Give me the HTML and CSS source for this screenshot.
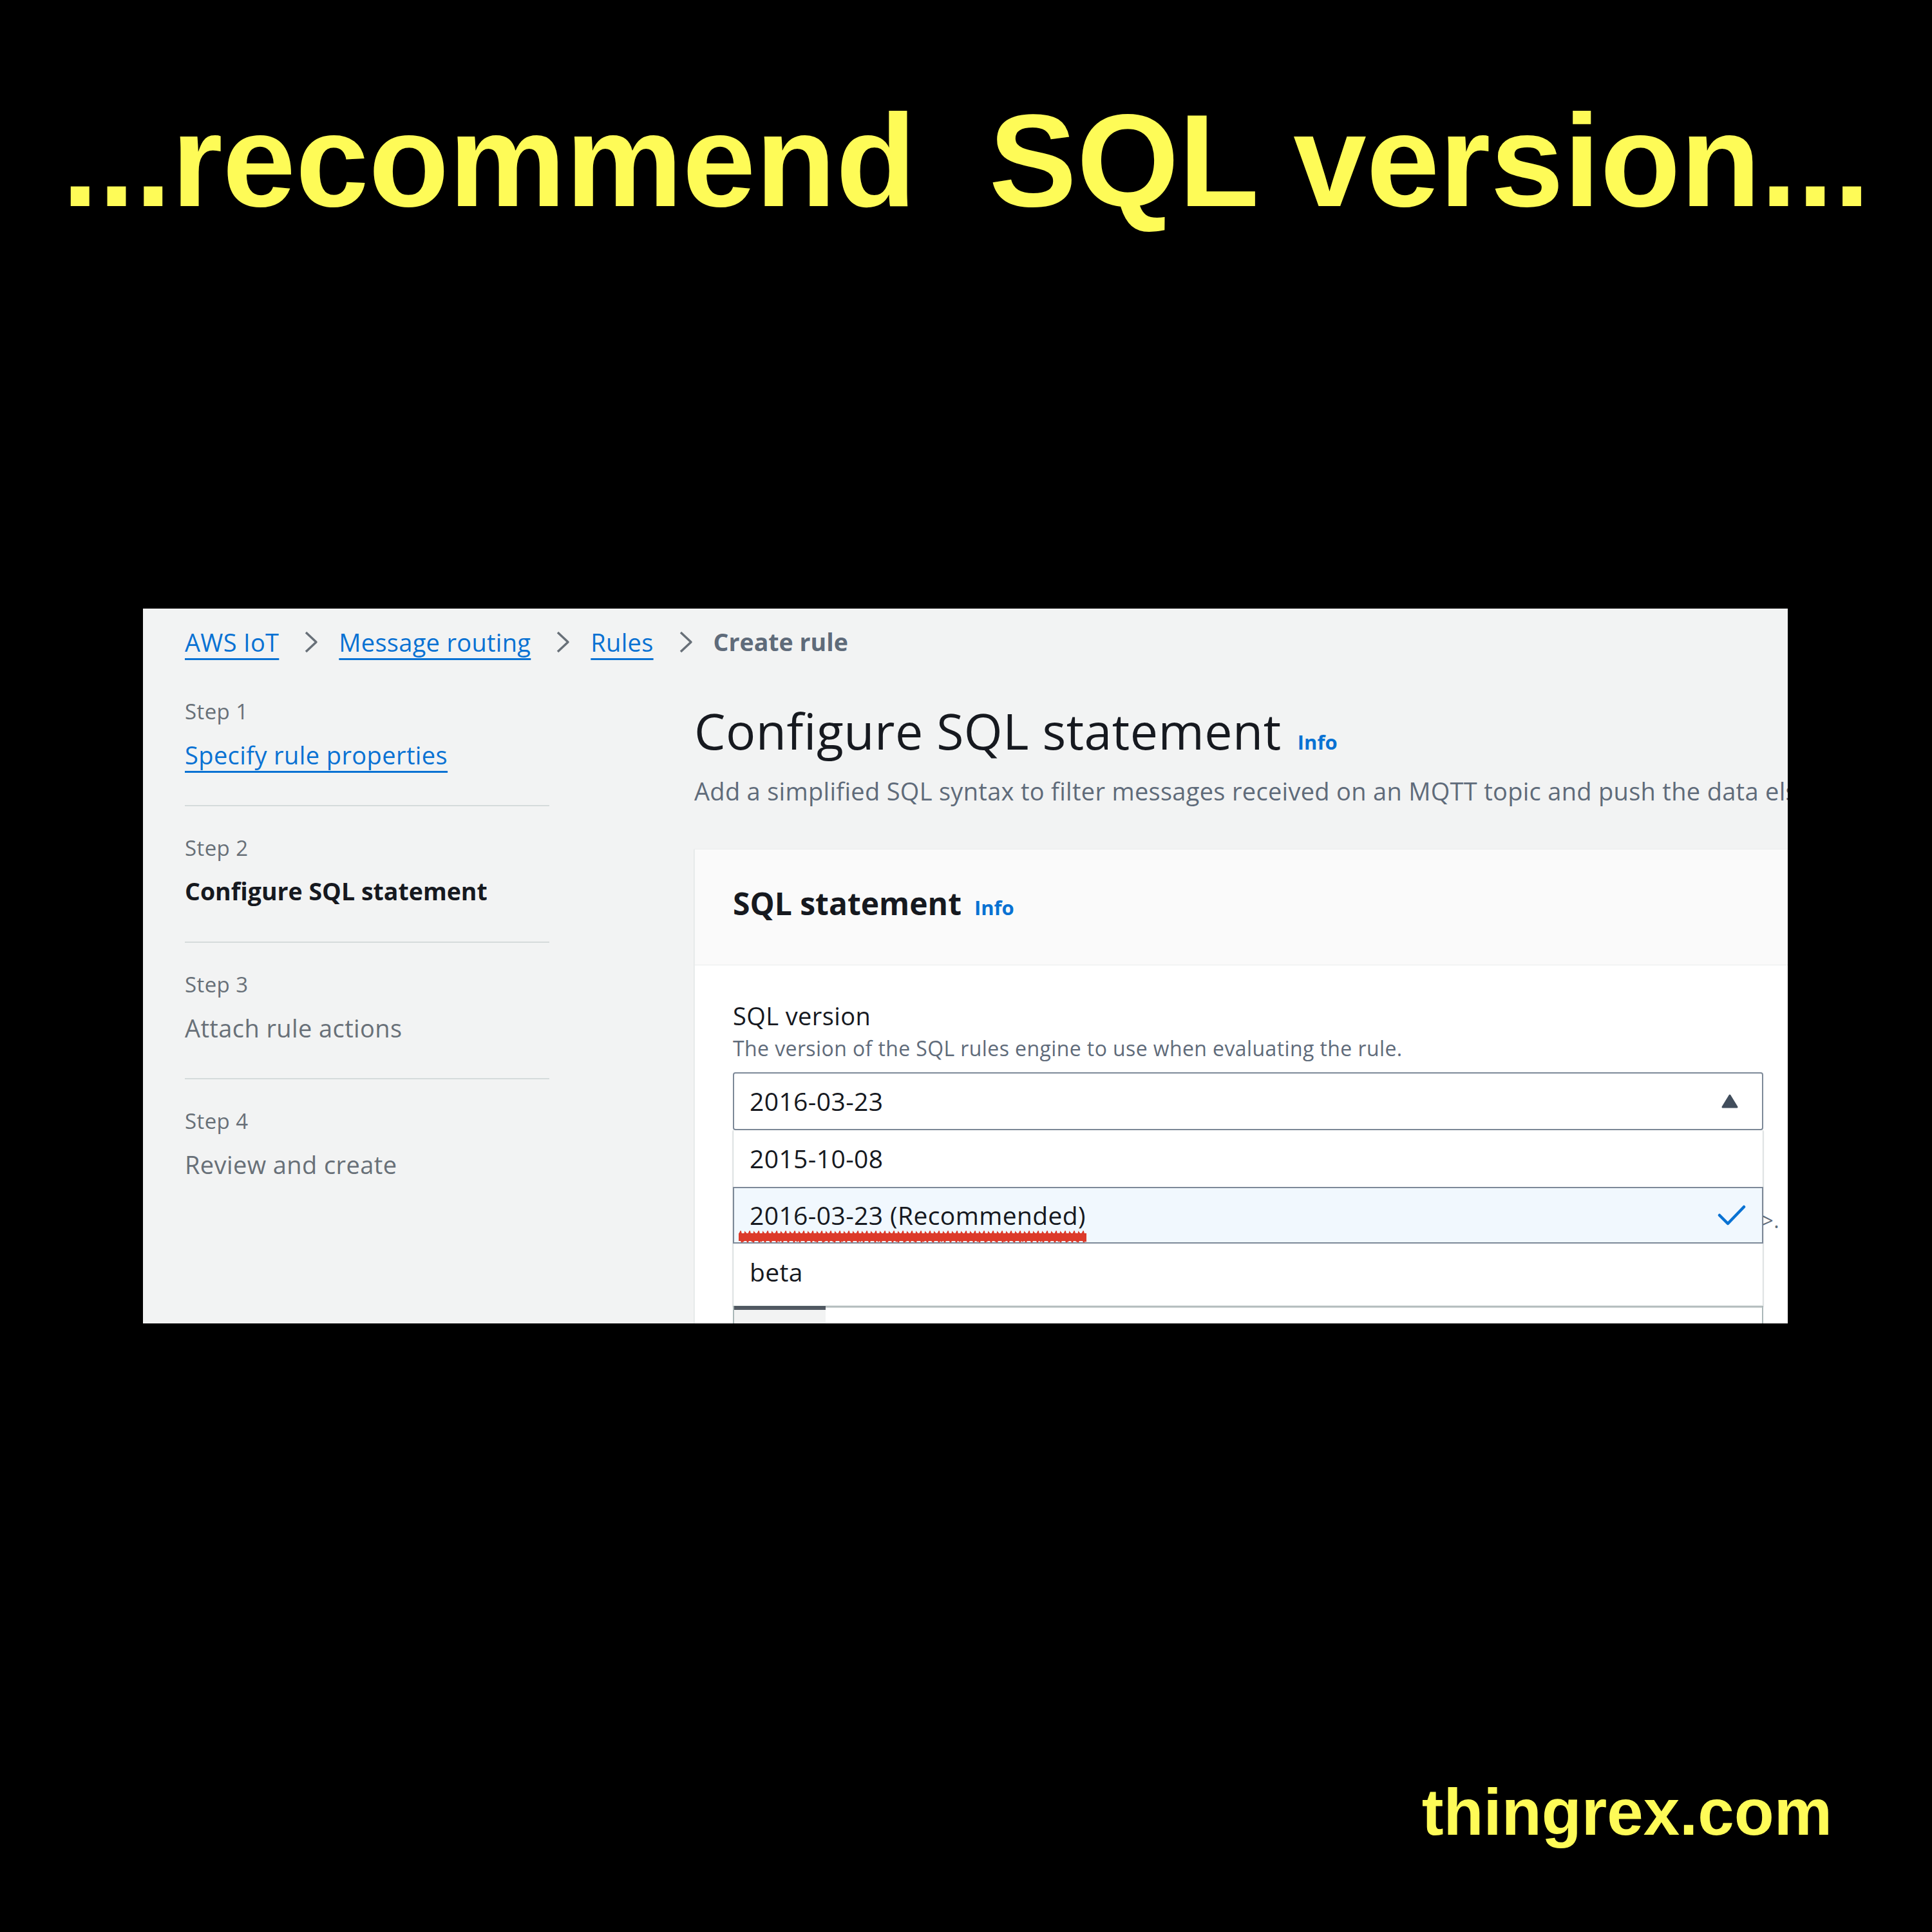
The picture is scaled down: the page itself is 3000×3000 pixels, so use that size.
FILE: index.html
```html
<!DOCTYPE html>
<html lang="en">
    <head>
        <meta charset="UTF-8" />
        <meta name="viewport" content="width=device-width, initial-scale=1.0" />
        <title>recommend SQL version</title>
        <link rel="stylesheet" href="styles.css">
    </head>
    <body>
        <div class="slide">
            <h1 class="headline">...recommend  SQL version...</h1>

            <!-- 控制台截图 -->
            <div class="shot">
                <nav class="crumbs">
                    <a href="#">AWS IoT</a>
                    <svg class="crumb-sep" viewBox="0 0 26 36"><polyline points="5,3 21,18 5,33" /></svg>
                    <a href="#">Message routing</a>
                    <svg class="crumb-sep" viewBox="0 0 26 36"><polyline points="5,3 21,18 5,33" /></svg>
                    <a href="#">Rules</a>
                    <svg class="crumb-sep" viewBox="0 0 26 36"><polyline points="5,3 21,18 5,33" /></svg>
                    <span class="crumb-current">Create rule</span>
                </nav>

                <div class="layout">
                    <ol class="steps">
                        <li class="step">
                            <div class="step-num">Step 1</div>
                            <a href="#" class="step-name is-link">Specify rule properties</a>
                        </li>
                        <li class="step">
                            <div class="step-num">Step 2</div>
                            <div class="step-name is-current">Configure SQL statement</div>
                        </li>
                        <li class="step">
                            <div class="step-num">Step 3</div>
                            <div class="step-name">Attach rule actions</div>
                        </li>
                        <li class="step">
                            <div class="step-num">Step 4</div>
                            <div class="step-name">Review and create</div>
                        </li>
                    </ol>

                    <main class="content">
                        <h2 class="page-title">Configure SQL statement<span class="info">Info</span></h2>
                        <p class="page-desc">Add a simplified SQL syntax to filter messages received on an MQTT topic and push the data elsewhere.</p>

                        <section class="panel">
                            <header class="panel-head">
                                <h3 class="panel-title">SQL statement<span class="info">Info</span></h3>
                            </header>
                            <div class="panel-body">
                                <div class="field">
                                    <div class="field-label">SQL version</div>
                                    <div class="field-hint">The version of the SQL rules engine to use when evaluating the rule.</div>
                                    <div class="select-wrap">
                                        <div class="select">
                                            <span>2016-03-23</span>
                                            <svg class="caret" viewBox="0 0 30 26"><polygon points="4,22 15,4 26,22" /></svg>
                                        </div>
                                        <!-- 下拉选项 -->
                                        <ul class="options">
                                            <li class="option">2015-10-08</li>
                                            <li class="option is-selected">
                                                <span>2016-03-23 (Recommended)</span>
                                                <svg class="check" viewBox="0 0 44 32"><polyline points="3,16 16,29 41,3" /></svg>
                                                <!-- 红色标记线 -->
                                                <svg class="squiggle" viewBox="0 0 540 20" preserveAspectRatio="none">
                                                    <defs>
                                                        <pattern id="zig-a" width="14" height="20" patternUnits="userSpaceOnUse">
                                                            <path d="M0 8 L3 2 L7 17 L10 3 L14 8" />
                                                        </pattern>
                                                        <pattern id="zig-b" width="9" height="20" patternUnits="userSpaceOnUse">
                                                            <path d="M0 12 L2 4 L5 18 L7 6 L9 12" />
                                                        </pattern>
                                                    </defs>
                                                    <rect x="0" y="4" width="540" height="12" class="squiggle-band" />
                                                    <rect x="0" y="0" width="540" height="20" fill="url(#zig-a)" />
                                                    <rect x="0" y="0" width="540" height="20" fill="url(#zig-b)" />
                                                </svg>
                                            </li>
                                            <li class="option">beta</li>
                                        </ul>
                                    </div>
                                </div>

                                <div class="field field-query">
                                    <div class="field-label">SQL query</div>
                                    <div class="field-hint hint-wide">
                                        <span>Enter a SQL statement using the following: SELECT &lt;Attribute&gt; FROM &lt;Topic Filter&gt; WHERE &lt;Condition&gt;.</span>
                                    </div>
                                </div>

                                <div class="editor">
                                    <div class="gutter"></div>
                                    <div class="code"></div>
                                </div>
                            </div>
                        </section>
                    </main>
                </div>
            </div>

            <div class="brand">thingrex.com</div>
        </div>
    </body>
</html>
```

FILE: styles.css
```css
* {
    margin: unset;
    padding: unset;
    box-sizing: border-box;
}
body {
    background: #000;
}
.slide {
    width: 3000px;
    height: 3000px;
    padding-top: 129px;
    font-family: "Open Sans", "Noto Sans", sans-serif;
}
.headline {
    font: bold 204px/240px "Liberation Sans", Arial, sans-serif;
    color: #fefb57;
    text-align: center;
    white-space: pre;
}
.brand {
    margin-top: 699px;
    padding-right: 155px;
    text-align: right;
    font: bold 101.5px/120px "Liberation Sans", Arial, sans-serif;
    color: #fefb57;
}

/* 截图区域 */
.shot {
    margin: 576px 0 0 222px;
    width: 2554px;
    height: 1110px;
    overflow: hidden;
    background: #f2f3f3;
    padding: 24px 0 0 65px;
    color: #16191f;
    letter-spacing: 0.4px;
}
.crumbs {
    display: flex;
    align-items: center;
    height: 56px;
    font-size: 38px;
    line-height: 56px;
    letter-spacing: 0.3px;
    a {
        color: #0972d3;
        text-decoration: underline;
        text-decoration-thickness: 3px;
        text-underline-offset: 10px;
    }
}
.crumb-sep {
    width: 26px;
    height: 36px;
    margin: 0 30px 0 37px;
    polyline {
        fill: none;
        stroke: #687078;
        stroke-width: 3.5;
        stroke-linejoin: round;
    }
}
.crumb-current {
    font-size: 37.5px;
    font-weight: 700;
    color: #5f6b7a;
    letter-spacing: 0;
}

.layout {
    display: flex;
}
.steps {
    list-style: none;
    margin-top: 15px;
    width: 566px;
    flex-shrink: 0;
}
.step {
    padding: 41px 0 50px;
}
.step + .step {
    border-top: 2px solid #d5dbdb;
}
.step-num {
    font-size: 33px;
    line-height: 48px;
    color: #687078;
}
.step-name {
    display: block;
    margin-top: 15px;
    font-size: 38px;
    line-height: 56px;
    color: #687078;
}
.step-name.is-link {
    color: #0972d3;
    text-decoration: underline;
    text-decoration-thickness: 3px;
    text-underline-offset: 10px;
}
.step-name.is-current {
    font-size: 37.5px;
    font-weight: 700;
    color: #16191f;
    letter-spacing: 0;
}

.content {
    width: 1720px;
    flex-shrink: 0;
    margin-left: 225px;
    padding-top: 62px;
}
.page-title {
    font-size: 77px;
    line-height: 96px;
    font-weight: 400;
    letter-spacing: 0.5px;
}
.info {
    margin-left: 25px;
    font-size: 31px;
    line-height: 1;
    font-weight: 700;
    color: #0972d3;
    letter-spacing: 0;
}
.panel-title .info {
    margin-left: 20px;
}
.page-desc {
    margin-top: 17px;
    font-size: 38px;
    line-height: 56px;
    color: #5f6b7a;
    white-space: nowrap;
    letter-spacing: 0.3px;
}

.panel {
    margin-top: 62px;
    background: #fff;
    border: 1px solid #eaeded;
    box-shadow: 0 1px 1px rgba(0, 28, 36, 0.3);
}
.panel-head {
    background: #fafafa;
    padding: 52px 59px 63px;
    border-bottom: 1px solid #eaeded;
}
.panel-title {
    font-size: 48px;
    line-height: 64px;
    font-weight: 700;
    letter-spacing: 0;
}
.panel-body {
    padding: 53px 20px 0 59px;
}
.field-label {
    font-size: 38px;
    line-height: 50px;
}
.field-hint {
    margin-top: 4px;
    font-size: 32px;
    line-height: 44px;
    color: #5f6b7a;
}
.hint-wide {
    display: flex;
    justify-content: flex-end;
    width: 1625px;
    white-space: nowrap;
}
.field-query {
    margin-top: 64px;
}

/* 下拉框 */
.select-wrap {
    position: relative;
    width: 1600px;
    margin-top: 15px;
}
.select {
    display: flex;
    align-items: center;
    justify-content: space-between;
    height: 90px;
    padding: 0 35px 0 24px;
    border: 2px solid #7d8998;
    border-radius: 4px;
    font-size: 39px;
    line-height: 86px;
    background: #fff;
}
.caret {
    width: 30px;
    height: 26px;
    polygon {
        fill: #414d5c;
        stroke: #414d5c;
        stroke-width: 3;
        stroke-linejoin: round;
    }
}
.options {
    position: absolute;
    top: 100%;
    left: 0;
    right: 0;
    z-index: 2;
    list-style: none;
    padding-bottom: 8px;
    background: #fff;
    border: 1px solid #d5dbdb;
    border-top: 0;
    box-shadow: 0 1px 2px rgba(0, 28, 36, 0.3);
    font-size: 39px;
}
.option {
    position: relative;
    display: flex;
    align-items: center;
    justify-content: space-between;
    height: 88px;
    padding: 0 25px;
    line-height: 88px;
}
.option.is-selected {
    margin: 0 -1px;
    padding: 0 25px 0 24px;
    border: 2px solid #7d8998;
    background: #f1f8fe;
    line-height: 84px;
}
.check {
    width: 44px;
    height: 32px;
    polyline {
        fill: none;
        stroke: #0972d3;
        stroke-width: 4.5;
        stroke-linecap: round;
        stroke-linejoin: round;
    }
}
.squiggle {
    position: absolute;
    left: 7px;
    bottom: -2px;
    width: 540px;
    height: 20px;
    path {
        fill: none;
        stroke: #dc3a2a;
        stroke-width: 2.5;
    }
}
.squiggle-band {
    fill: #dc3a2a;
}

.editor {
    display: flex;
    width: 1600px;
    height: 200px;
    margin-top: 110px;
    border-top: 4px solid #d5dbdb;
    border-left: 2px solid #aab7b8;
    border-right: 2px solid #aab7b8;
}
.gutter {
    width: 142px;
    margin-top: -4px;
    background: #f2f3f3;
    border-top: 7px solid #545b64;
}
.code {
    flex: 1;
    background: #fff;
}
```
